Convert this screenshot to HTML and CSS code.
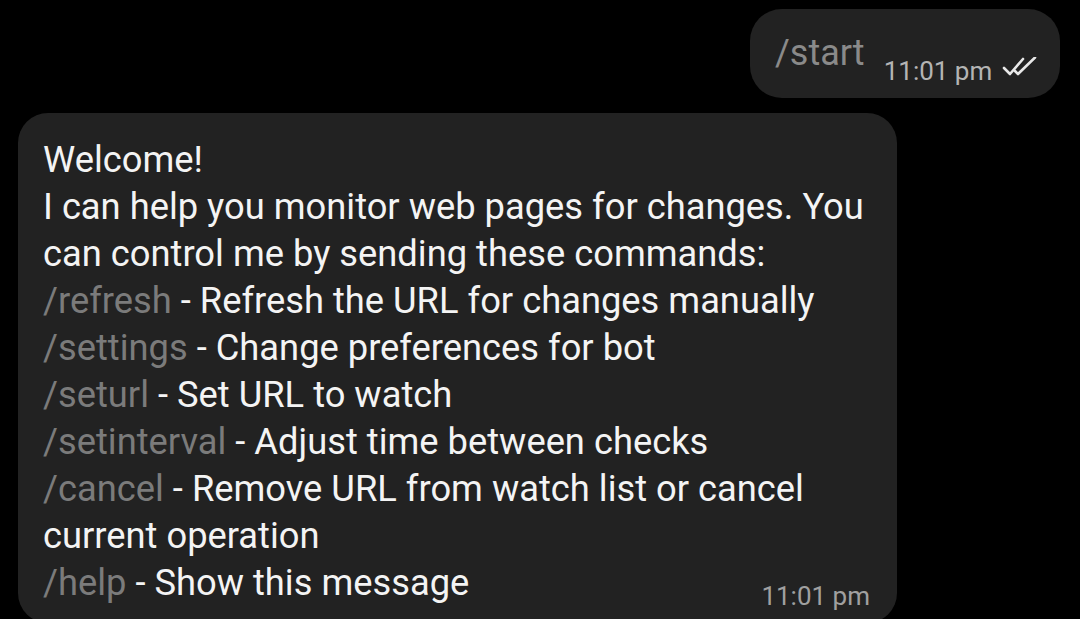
FILE: index.html
```html
<!DOCTYPE html>
<html>
<head>
<meta charset="utf-8">
<link rel="stylesheet" href="styles.css">
</head>
<body>
<div class="chat">
  <div class="bubble out">
    <span class="cmd-big">/start</span>
    <span class="time">11:01 pm</span>
    <svg class="checks" viewBox="0 0 38 20" width="38" height="20">
      <path d="M2 11 L8 17 L21 2" fill="none" stroke="#e8e8e8" stroke-width="2.6" stroke-linecap="round" stroke-linejoin="round"/>
      <path d="M13 14 L16 17 L33 0.5" fill="none" stroke="#e8e8e8" stroke-width="2.6" stroke-linecap="round" stroke-linejoin="round"/>
    </svg>
  </div>
  <div class="bubble in">
    <div class="line">Welcome!</div>
    <div class="line">I can help you monitor web pages for changes. You</div>
    <div class="line">can control me by sending these commands:</div>
    <div class="line"><span class="cmd">/refresh</span> - Refresh the URL for changes manually</div>
    <div class="line"><span class="cmd">/settings</span> - Change preferences for bot</div>
    <div class="line"><span class="cmd">/seturl</span> - Set URL to watch</div>
    <div class="line"><span class="cmd">/setinterval</span> - Adjust time between checks</div>
    <div class="line"><span class="cmd">/cancel</span> - Remove URL from watch list or cancel</div>
    <div class="line">current operation</div>
    <div class="line last"><span><span class="cmd">/help</span> - Show this message</span><span class="time in-time">11:01 pm</span></div>
  </div>
</div>
</body>
</html>
```
FILE: styles.css
```css
html, body {
  margin: 0;
  padding: 0;
  background: #000;
  height: 100%;
  overflow: hidden;
}
body {
  font-family: Roboto, "Liberation Sans", sans-serif;
  color: #f4f4f4;
}
.chat {
  display: flex;
  flex-direction: column;
  padding-top: 9px;
}
.bubble {
  background: #222222;
  box-sizing: border-box;
}
.out {
  align-self: flex-end;
  margin-right: 20px;
  width: 310px;
  height: 89px;
  border-radius: 32px;
  display: flex;
  align-items: flex-start;
  padding: 21px 0 0 25px;
}
.cmd-big {
  font-size: 36px;
  line-height: 47px;
  color: #8a8a8a;
}
.time {
  font-size: 26px;
  line-height: 30px;
  color: #a8a8a8;
  white-space: nowrap;
}
.out .time {
  margin-top: 26px;
  margin-left: 19px;
  color: #b4b4b4;
}
.checks {
  margin-top: 27px;
  margin-left: 10px;
}
.in {
  margin-left: 18px;
  margin-top: 15px;
  width: 879px;
  border-radius: 30px;
  padding: 23px 27px 12px 25px;
}
.line {
  font-size: 36.3px;
  line-height: 47px;
  white-space: nowrap;
}
.cmd {
  color: #7b7b7b;
}
.last {
  display: flex;
  justify-content: space-between;
  align-items: flex-start;
}
.in-time {
  margin-top: 22px;
  font-size: 26px;
  color: #a0a0a0;
}
```
